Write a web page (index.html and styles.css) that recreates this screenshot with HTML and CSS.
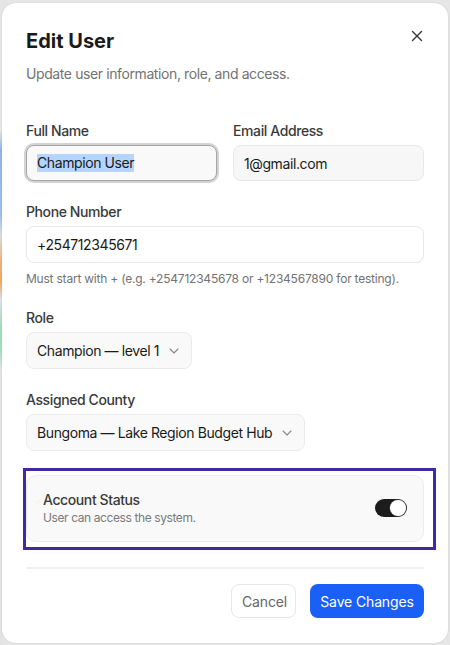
FILE: index.html
```html
<!DOCTYPE html>
<html>
<head>
<meta charset="utf-8">
<link rel="stylesheet" href="styles.css">
</head>
<body>
<div class="modal">
  <button class="close" aria-label="Close">
    <svg width="12" height="12" viewBox="0 0 12 12"><path d="M1.5 1.5 L10.5 10.5 M10.5 1.5 L1.5 10.5" stroke="#333" stroke-width="1.4" stroke-linecap="round"/></svg>
  </button>
  <div class="header">
    <h1 class="title">Edit User</h1>
    <p class="subtitle">Update user information, role, and access.</p>
  </div>

  <div class="form">
    <div class="row">
      <div class="field">
        <label class="label">Full Name</label>
        <div class="input focused"><span class="sel">Champion User</span></div>
      </div>
      <div class="field">
        <label class="label">Email Address</label>
        <div class="input grey">1@gmail.com</div>
      </div>
    </div>

    <div class="field">
      <label class="label">Phone Number</label>
      <div class="input white">+254712345671</div>
      <p class="hint">Must start with + (e.g. +254712345678 or +1234567890 for testing).</p>
    </div>

    <div class="field">
      <label class="label">Role</label>
      <div class="select">Champion — level 1
        <svg class="chev" width="10" height="6" viewBox="0 0 10 6"><path d="M1 1 L5 5 L9 1" fill="none" stroke="#888" stroke-width="1.1" stroke-linecap="round" stroke-linejoin="round"/></svg>
      </div>
    </div>

    <div class="field">
      <label class="label">Assigned County</label>
      <div class="select">Bungoma — Lake Region Budget Hub
        <svg class="chev" width="10" height="6" viewBox="0 0 10 6"><path d="M1 1 L5 5 L9 1" fill="none" stroke="#888" stroke-width="1.1" stroke-linecap="round" stroke-linejoin="round"/></svg>
      </div>
    </div>

    <div class="status">
      <div class="status-text">
        <div class="status-title">Account Status</div>
        <div class="status-sub">User can access the system.</div>
      </div>
      <div class="toggle"><div class="thumb"></div></div>
      <div class="annot"></div>
    </div>
  </div>

  <div class="footer">
    <button class="btn cancel">Cancel</button>
    <button class="btn save">Save Changes</button>
  </div>
</div>
</body>
</html>
```

FILE: styles.css
```css
* { box-sizing: border-box; }
html, body { margin: 0; padding: 0; }
body {
  width: 450px;
  height: 645px;
  overflow: hidden;
  font-family: "Inter", "Liberation Sans", sans-serif;
  letter-spacing: -0.025em;
  background:
    linear-gradient(to bottom, transparent 130px, #8fb6e6 150px, #9cc0ea 215px, #d9dde3 235px, #f0b27a 262px, #f3a866 282px, #dfe3e6 300px, #9fdcb4 330px, #a8e0bd 352px, #e2e4e4 370px) left top / 3px 100% no-repeat,
    #e6e6e6;
  padding: 3px 2px 2px 2px;
}
.modal {
  position: relative;
  background: #fff;
  border-radius: 14px;
  height: 640px;
  padding: 24px 24px 24px 24px;
  display: flex;
  flex-direction: column;
  box-shadow: 0 0 2px rgba(0,0,0,0.12);
}
.close {
  position: absolute;
  top: 26px;
  right: 24px;
  width: 14px;
  height: 14px;
  padding: 0;
  border: 0;
  background: none;
  display: flex;
  align-items: center;
  justify-content: center;
}
.header { margin-bottom: 37px; }
.title {
  margin: 0;
  font-size: 20px;
  line-height: 28px;
  font-weight: 700;
  color: #1a1a1a;
  letter-spacing: 0;
}
.subtitle {
  margin: 9px 0 0 0;
  font-size: 14px;
  line-height: 20px;
  color: #737373;
}
.form {
  display: flex;
  flex-direction: column;
  gap: 21px;
}
.row {
  display: grid;
  grid-template-columns: 1fr 1fr;
  gap: 16px;
}
.field { display: flex; flex-direction: column; }
.label {
  display: block;
  font-size: 14px;
  line-height: 20px;
  font-weight: 500;
  color: #3a3a3a;
  margin-bottom: 4px;
}
.input {
  height: 37px;
  border: 1px solid #e8e8e8;
  border-radius: 8px;
  background: #f9f9f9;
  padding: 0 10px;
  display: flex;
  align-items: center;
  font-size: 14px;
  color: #1a1a1a;
}
.row .input { height: 36px; }
.input.white { background: #fff; }
.input.grey { background: #f7f7f7; }
.input.focused {
  border-color: #a6a6a6;
  box-shadow: 0 0 0 2px #d3d3d3;
}
.sel { background: #b4d5fd; line-height: 18px; }
.hint {
  margin: 8px 0 0 0;
  font-size: 12px;
  line-height: 16px;
  color: #737373;
  letter-spacing: -0.018em;
}
.select {
  align-self: flex-start;
  height: 37px;
  border: 1px solid #ebebeb;
  border-radius: 8px;
  background: #f9f9f9;
  padding: 0 12px 0 10px;
  display: flex;
  align-items: center;
  gap: 10px;
  font-size: 14px;
  color: #1a1a1a;
}
.chev { flex: none; margin-top: 1px; }
.status {
  position: relative;
  margin-top: 3px;
  border: 1px solid #ececec;
  border-radius: 10px;
  background: #f9f9f9;
  padding: 14px 16px 15px 16px;
  display: flex;
  align-items: center;
  justify-content: space-between;
}
.status-title {
  font-size: 14px;
  line-height: 20px;
  font-weight: 500;
  color: #3a3a3a;
}
.status-sub {
  font-size: 12px;
  line-height: 16px;
  color: #7a7a7a;
}
.toggle {
  width: 32px;
  height: 18px;
  border-radius: 9px;
  background: #1c1c1c;
  position: relative;
}
.thumb {
  position: absolute;
  right: 1px;
  top: 1px;
  width: 16px;
  height: 16px;
  border-radius: 50%;
  background: #fff;
  box-shadow: 0 0 0 0.5px #555;
}
.annot {
  position: absolute;
  left: -4px;
  right: -13px;
  top: -8px;
  bottom: -9px;
  border: 3px solid #4227a6;
  pointer-events: none;
}
.footer {
  margin-top: 25px;
  border-top: 2px solid #efefef;
  padding-top: 15px;
  display: flex;
  justify-content: flex-end;
  gap: 14px;
}
.btn {
  height: 34px;
  border-radius: 8px;
  font-family: inherit;
  letter-spacing: -0.01em;
  font-size: 14px;
  padding: 0 10px;
  white-space: nowrap;
}
.cancel {
  background: #fff;
  border: 1px solid #e6e6e6;
  color: #666;
  width: 65px;
}
.save {
  background: #1a60f7;
  border: 0;
  color: #fff;
  width: 114px;
}
```
